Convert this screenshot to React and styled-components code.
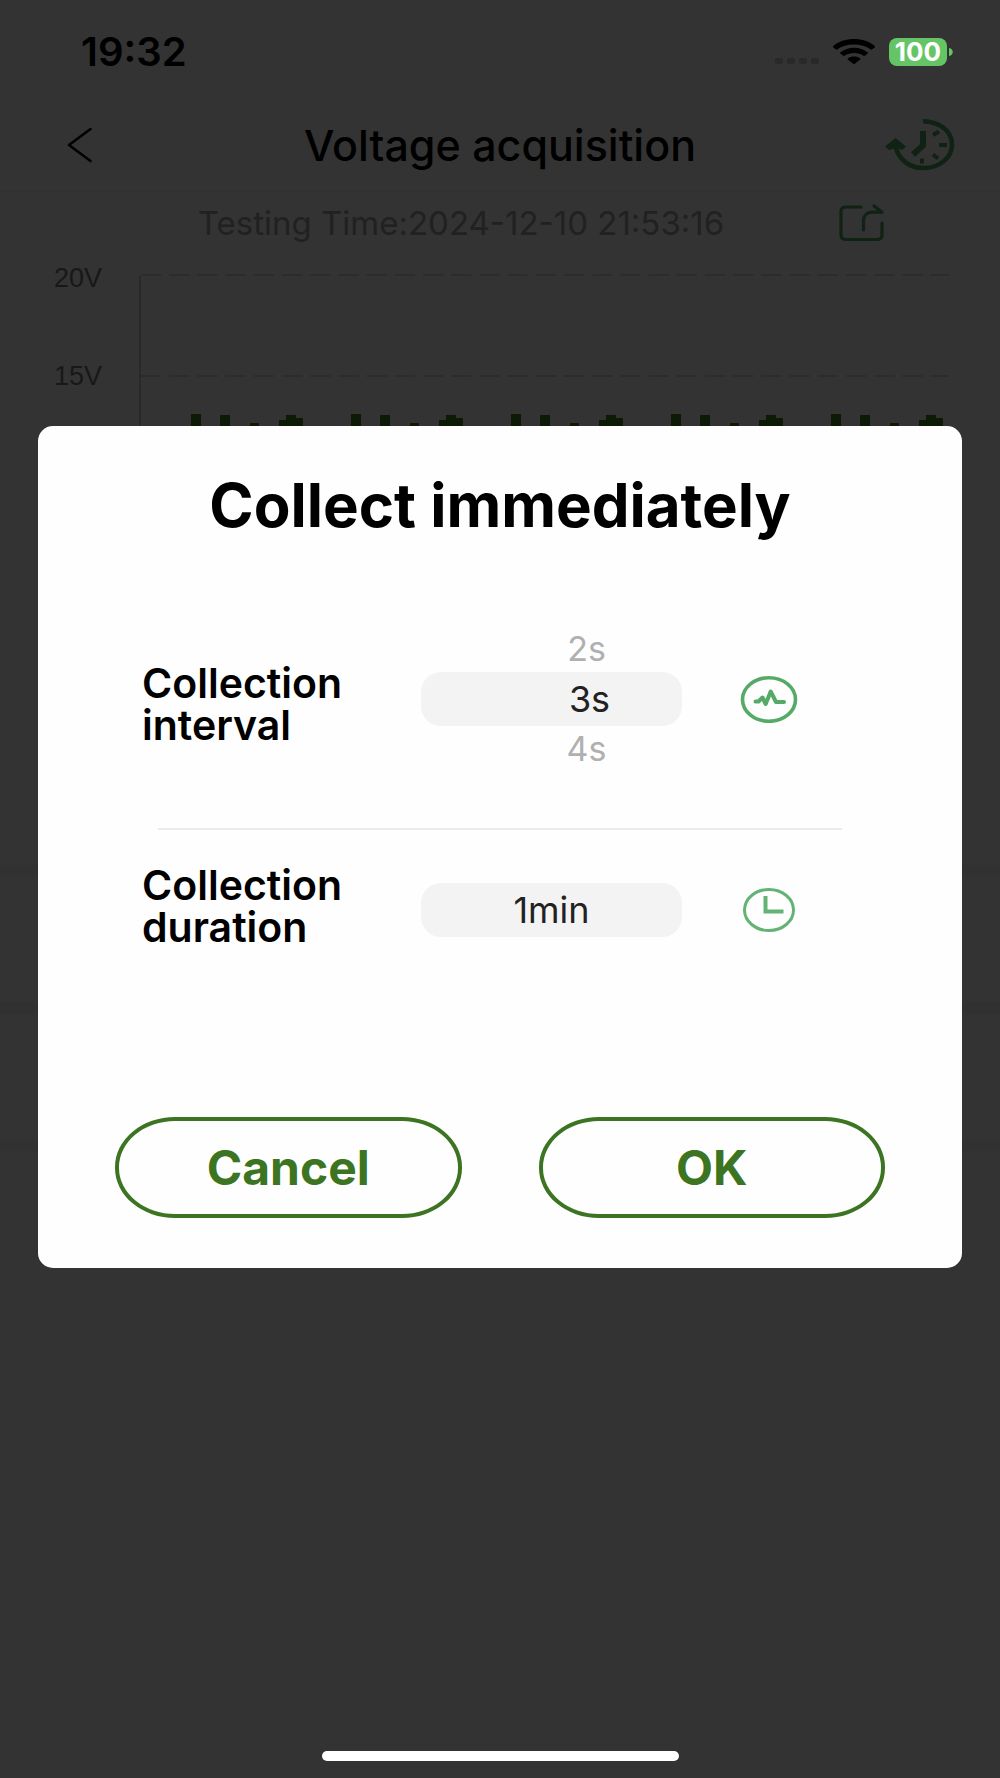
import React, { useState } from "react";
import styled, { createGlobalStyle } from "styled-components";

const GlobalStyle = createGlobalStyle`
  *, *::before, *::after { box-sizing: border-box; }
  body {
    margin: 0;
    background: #333333;
    font-family: Inter, "Liberation Sans", sans-serif;
    color: #000000;
  }
  button, select { font-family: inherit; }
`;

const Screen = styled.div`
  position: relative;
  display: flex;
  flex-direction: column;
  min-height: 100vh;
  overflow: hidden;
`;

const StatusBar = styled.div`
  display: flex;
  align-items: center;
  justify-content: space-between;
  height: 104px;
  padding: 0 47px 0 81px;
`;

const Clock = styled.time`
  font-size: 40px;
  line-height: 40px;
  font-weight: 600;
`;

const StatusIcons = styled.div`
  display: flex;
  align-items: center;
  gap: 14px;
`;

const Battery = styled.div`
  display: flex;
  align-items: center;
  gap: 2px;
`;

const BatteryLevel = styled.span`
  width: 58px;
  border-radius: 8px;
  background: #65c466;
  color: #ffffff;
  font-size: 26px;
  line-height: 28px;
  font-weight: 700;
  text-align: center;
`;

const Header = styled.header`
  display: grid;
  grid-template-columns: 1fr auto 1fr;
  align-items: center;
  height: 88px;
  padding: 0 45px 4px;
  border-bottom: 2px solid #313131;
`;

const IconButton = styled.button`
  display: flex;
  justify-self: ${(p) => p.$side};
  padding: 0 ${(p) => (p.$side === "start" ? 22 : 0)}px;
  border: 0;
  background: none;
  color: ${(p) => p.$color};
`;

const PageTitle = styled.h1`
  margin: 0;
  font-size: 43px;
  line-height: 48px;
  font-weight: 500;
`;

const TestInfo = styled.div`
  display: flex;
  align-items: center;
  height: 62px;
  padding: 0 116px 0 83px;
`;

const TestTime = styled.p`
  flex: 1;
  margin: 0;
  color: #212121;
  font-size: 33px;
  line-height: 36px;
  text-align: center;
`;

const Chart = styled.section`
  display: flex;
  height: 611px;
  padding-right: 51px;
`;

const AxisLabels = styled.div`
  display: flex;
  flex-direction: column;
  gap: 68px;
  width: 139px;
  padding: 9px 37px 0 0;
  color: #181818;
  font-family: "Liberation Sans", sans-serif;
  font-size: 27px;
  line-height: 30px;
  text-align: right;
`;

const Plot = styled.svg`
  flex: 1;
  min-width: 0;
  height: 100%;
`;

const Section = styled.div`
  height: 137px;
  border-top: 12px solid #313131;
`;

const HomeIndicator = styled.div`
  width: 357px;
  height: 10px;
  margin: auto auto 17px;
  border-radius: 5px;
  background: #ffffff;
`;

const Overlay = styled.div`
  position: absolute;
  inset: 0;
  padding: 426px 38px 0;
`;

const Dialog = styled.form`
  display: flex;
  flex-direction: column;
  padding: 48px 0 50px;
  border-radius: 15px;
  background: #fefefe;
`;

const DialogTitle = styled.h2`
  margin: 0 0 88px;
  font-size: 60px;
  line-height: 62px;
  font-weight: 700;
  text-align: center;
`;

const Row = styled.div`
  display: grid;
  grid-template-columns: 1fr auto;
  gap: 56px;
  align-items: start;
  padding: 0 163px 0 104px;
`;

const RowLabel = styled.label`
  padding-top: ${(p) => (p.$tall ? 38 : 0)}px;
  font-size: 41px;
  line-height: 42px;
  font-weight: 600;
`;

const Control = styled.div`
  display: flex;
  align-items: center;
  gap: 57px;
  min-height: ${(p) => p.$height}px;
`;

const Wheel = styled.div`
  display: flex;
  flex-direction: column;
  align-items: stretch;
  width: 261px;
`;

const WheelItem = styled.label`
  padding-left: ${(p) => (p.$selected ? 76 : 70)}px;
  border-radius: 20px;
  background: ${(p) => (p.$selected ? "#f3f3f3" : "transparent")};
  color: ${(p) => (p.$selected ? "#222222" : "#b0b0b0")};
  font-size: ${(p) => (p.$selected ? 36 : 34)}px;
  line-height: ${(p) => (p.$selected ? 54 : 46)}px;
  text-align: center;
`;

const HiddenRadio = styled.input`
  position: absolute;
  width: 1px;
  height: 1px;
  margin: 0;
  opacity: 0;
  appearance: none;
`;

const DurationSelect = styled.select`
  width: 261px;
  height: 54px;
  padding: 0;
  border: 0;
  border-radius: 20px;
  appearance: none;
  background: #f3f3f3;
  color: #222222;
  font-size: 36px;
  line-height: 54px;
  text-align: center;
  text-align-last: center;
`;

const Divider = styled.hr`
  align-self: stretch;
  height: 2px;
  margin: 54px 120px 34px;
  border: 0;
  background: #ebebeb;
`;

const Actions = styled.div`
  display: flex;
  gap: 77px;
  margin-top: 161px;
  padding: 0 77px;
`;

const ActionButton = styled.button`
  flex: 1;
  height: 101px;
  padding: 0;
  border: 4px solid #3c7422;
  border-radius: 60px / 50px;
  background: none;
  color: #3c7422;
  font-size: 48px;
  line-height: 54px;
  font-weight: 700;
`;

const barClusters = [52, 212, 372, 532, 692];
const gridLines = [21, 122];
const intervals = ["2s", "3s", "4s"];

function SignalDots() {
  return (
    <svg width="44" height="26" viewBox="0 0 44 26" fill="#292929" aria-hidden="true">
      {[0, 12, 24, 36].map((x) => (
        <rect key={x} x={x} y="19" width="8" height="6" rx="2.5" />
      ))}
    </svg>
  );
}

function WifiIcon() {
  return (
    <svg width="42" height="26" viewBox="0 0 42 26" aria-hidden="true">
      <path d="M0 7.2C11-2.4 31-2.4 42 7.2c.3.3.3.7 0 1l-3 2.3c-.4.3-.8.3-1.200 0C29 3.900 13 3.900 4.200 10.500c-.4.3-.8.3-1.200 0L0 8.200c-.3-.3-.3-.7 0-1Z" />
      <path d="M7.200 13.500C15 7.200 27 7.200 34.800 13.500c.3.300.3.600 0 .9l-3.100 2.300c-.4.300-.8.300-1.200 0-5.300-3.600-13.700-3.600-19 0-.4.300-.8.300-1.200 0l-3.100-2.300c-.3-.3-.3-.6 0-.9Z" />
      <path d="M14.800 19.500c3.600-2.600 8.800-2.600 12.400 0 .3.300.3.600 0 .9l-5.700 4.500c-.3.200-.7.200-1 0l-5.700-4.500c-.3-.3-.3-.6 0-.9Z" />
    </svg>
  );
}

function BackIcon() {
  return (
    <svg width="25" height="36" viewBox="0 0 25 36" fill="none" stroke="currentColor" strokeWidth="2.500" strokeLinecap="round" strokeLinejoin="round">
      <path d="M23.500 2 2 18l21.500 16" />
    </svg>
  );
}

function HistoryIcon() {
  return (
    <svg width="70" height="52" viewBox="0 0 70 52" fill="none" stroke="currentColor">
      <path d="M38 2.200C55 2.500 67 12.500 67 25.500S55 49 38.500 49C24 49 13 40 10.500 27" strokeWidth="4.500" />
      <path d="M0 27.500 10.500 19 21 27.500 17 31 11 29 4 31Z" fill="currentColor" stroke="none" />
      <path d="M38 12v14.500L28 35.500" strokeWidth="6" />
      <path d="m48 16 6-3.500M54 26h8M48 35.500l5 4M37 39.500v5" strokeWidth="4" />
    </svg>
  );
}

function ShareIcon() {
  return (
    <svg width="45" height="38" viewBox="0 0 45 38" fill="none" stroke="currentColor" strokeWidth="3.200" strokeLinecap="round" strokeLinejoin="round">
      <path d="M22 3H7C3.500 3 2 4.500 2 7v24c0 3 1.500 4.500 5 4.500h31c3.500 0 5-1.500 5-4.500V19" />
      <path d="M24.500 26V17c0-5.500 3.500-8.800 9-8.800H43L35 2" />
    </svg>
  );
}

function PulseIcon() {
  return (
    <svg width="60" height="48" viewBox="0 0 60 48" fill="none" stroke="#55aa67" strokeLinejoin="round" strokeLinecap="round" aria-hidden="true">
      <ellipse cx="30" cy="24.500" rx="26.500" ry="21.800" strokeWidth="3.600" />
      <path d="M16.500 26.500h3l4-4 3.200 6.500 5-12.500 5.300 10.500H45" strokeWidth="4" />
    </svg>
  );
}

function ClockIcon() {
  return (
    <svg width="60" height="48" viewBox="0 0 60 48" fill="none" stroke="#62b374" aria-hidden="true">
      <ellipse cx="30" cy="24" rx="24.500" ry="20.500" strokeWidth="3" />
      <path d="M26.500 10v15.500h18" strokeWidth="4" />
    </svg>
  );
}

function VoltageChart() {
  return (
    <Chart aria-label="Voltage chart">
      <AxisLabels>
        <span>20V</span>
        <span>15V</span>
      </AxisLabels>
      <Plot viewBox="0 0 810 611" preserveAspectRatio="none">
        <path d="M1 22V560" stroke="#272a2d" strokeWidth="2" />
        {gridLines.map((y) => (
          <path key={y} d={`M2 ${y}H810`} stroke="#2c2c2c" strokeWidth="2" strokeDasharray="20.200 8" />
        ))}
        {barClusters.map((x) => (
          <path
            key={x}
            fill="#0c1a06"
            d={`M${x} 560V160h10V560ZM${x + 29} 560V161h10V560ZM${x + 59} 560V169h9V560ZM${x + 88} 560V166h7v-5h10v3h7V560Z`}
          />
        ))}
      </Plot>
    </Chart>
  );
}

export default function App() {
  const [interval, setInterval] = useState("3s");

  return (
    <>
      <GlobalStyle />
      <Screen>
        <StatusBar>
          <Clock>19:32</Clock>
          <StatusIcons>
            <SignalDots />
            <WifiIcon />
            <Battery>
              <BatteryLevel>100</BatteryLevel>
              <svg width="4" height="8" viewBox="0 0 4 8" fill="#65c466" aria-hidden="true">
                <path d="M0 0c5 1 5 7 0 8Z" />
              </svg>
            </Battery>
          </StatusIcons>
        </StatusBar>
        <Header>
          <IconButton type="button" aria-label="Back" $side="start" $color="#000000">
            <BackIcon />
          </IconButton>
          <PageTitle>Voltage acquisition</PageTitle>
          <IconButton type="button" aria-label="History" $side="end" $color="#102213">
            <HistoryIcon />
          </IconButton>
        </Header>
        <TestInfo>
          <TestTime>Testing Time:2024-12-10 21:53:16</TestTime>
          <IconButton type="button" aria-label="Share" $side="end" $color="#102213">
            <ShareIcon />
          </IconButton>
        </TestInfo>
        <VoltageChart />
        <Section />
        <Section />
        <Section />
        <HomeIndicator />

        <Overlay>
          <Dialog role="dialog" aria-labelledby="dialog-title" onSubmit={(e) => e.preventDefault()}>
            <DialogTitle id="dialog-title">Collect immediately</DialogTitle>
            <Row>
              <RowLabel as="div" id="interval-label" $tall>
                Collection interval
              </RowLabel>
              <Control $height={150}>
                <Wheel role="radiogroup" aria-labelledby="interval-label">
                  {intervals.map((value) => (
                    <WheelItem key={value} $selected={value === interval}>
                      <HiddenRadio
                        type="radio"
                        name="interval"
                        value={value}
                        checked={value === interval}
                        onChange={() => setInterval(value)}
                      />
                      {value}
                    </WheelItem>
                  ))}
                </Wheel>
                <PulseIcon />
              </Control>
            </Row>
            <Divider />
            <Row>
              <RowLabel htmlFor="duration">Collection duration</RowLabel>
              <Control $height={92}>
                <DurationSelect id="duration" defaultValue="1min">
                  <option>1min</option>
                </DurationSelect>
                <ClockIcon />
              </Control>
            </Row>
            <Actions>
              <ActionButton type="button">Cancel</ActionButton>
              <ActionButton type="submit">OK</ActionButton>
            </Actions>
          </Dialog>
        </Overlay>
      </Screen>
    </>
  );
}
